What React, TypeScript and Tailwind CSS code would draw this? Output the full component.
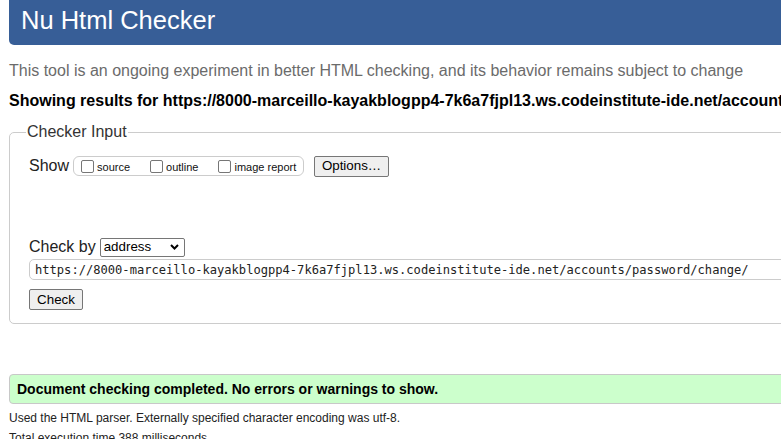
import React from 'react';

const CheckBox: React.FC<{ label: string; last?: boolean }> = ({ label, last }) => (
  <span className={`flex items-center ${last ? '' : 'mr-[20px]'}`}>
    <span className="w-[13px] h-[13px] border border-[#767676] rounded-[2px] bg-white" />
    <span className="ml-[3px] mt-[2px] text-[11px] leading-[13px] text-[#111]">{label}</span>
  </span>
);

const App: React.FC = () => {
  const url =
    'https://8000-marceillo-kayakblogpp4-7k6a7fjpl13.ws.codeinstitute-ide.net/accounts/password/change/';

  return (
    <div className="w-[781px] h-[439px] overflow-hidden bg-white font-['Liberation_Sans',Arial,sans-serif] text-[#111]">
      <div className="w-[1100px] pl-[9px]">
        {/* Title bar */}
        <div className="h-[45px] rounded-b-[5px] bg-[#375e97] pl-[12px] pt-[4px]">
          <h1 className="text-[25.5px] leading-[32px] text-white">Nu Html Checker</h1>
        </div>

        <p className="mt-[16px] text-[16px] leading-[20px] text-[#6b6b6b]">
          This tool is an ongoing experiment in better HTML checking, and its behavior remains subject to change
        </p>
        <p className="mt-[10px] text-[16px] leading-[20px] font-bold text-black">
          Showing results for {url}
        </p>

        {/* Checker input */}
        <fieldset className="mt-[11px] border border-[#cccccc] rounded-[5px] pl-[19px] pb-[12px]">
          <legend className="ml-[-3px] px-[1px] text-[16px] leading-[20px] text-[#333]">Checker Input</legend>

          <div className="mt-[13px] h-[22px] flex items-center">
            <span className="text-[16px] leading-[20px] text-[#222]">Show</span>
            <div className="ml-[4px] h-[20px] w-[231px] flex items-center border border-[#cccccc] rounded-[6px] pl-[7px]">
              <CheckBox label="source" />
              <CheckBox label="outline" />
              <CheckBox label="image report" last />
            </div>
            <button className="ml-[10px] h-[21px] w-[75px] border border-[#767676] rounded-[2px] bg-[#efefef] text-[13.33px] leading-[16px] text-black">
              Options…
            </button>
          </div>

          <div className="mt-[60px] h-[20px] flex items-center">
            <span className="text-[16px] leading-[20px] text-[#222]">Check by</span>
            <div className="ml-[4px] h-[19px] w-[85px] flex items-center justify-between border border-[#767676] rounded-[2px] bg-white pl-[3px] pr-[5px]">
              <span className="text-[13.33px] leading-[16px] text-black">address</span>
              <svg width="9" height="6" viewBox="0 0 9 6">
                <path d="M1 1 L4.5 4.5 L8 1" fill="none" stroke="#000" strokeWidth="2" />
              </svg>
            </div>
          </div>

          <div className="mt-[2px] h-[21px] flex items-center border border-[#cccccc] rounded-l-[5px] pl-[5px]">
            <span className="font-['DejaVu_Sans_Mono',monospace] text-[12.1px] leading-[16px] text-[#222] whitespace-nowrap">
              {url}
            </span>
          </div>

          <button className="mt-[9px] h-[21px] w-[54px] border border-[#767676] rounded-[2px] bg-[#efefef] text-[13.33px] leading-[16px] text-black">
            Check
          </button>
        </fieldset>

        {/* Result */}
        <div className="mt-[50px] h-[30px] flex items-center border border-[#c8c8c8] rounded-[4px] bg-[#ccffcc] pl-[7px]">
          <span className="text-[14px] leading-[18px] font-bold text-black">
            Document checking completed. No errors or warnings to show.
          </span>
        </div>
        <p className="mt-[6px] text-[12px] leading-[16px] text-[#222]">
          Used the HTML parser. Externally specified character encoding was utf-8.
        </p>
        <p className="mt-[4px] text-[12px] leading-[16px] text-[#222]">Total execution time 388 milliseconds.</p>
      </div>
    </div>
  );
};

export default App;
